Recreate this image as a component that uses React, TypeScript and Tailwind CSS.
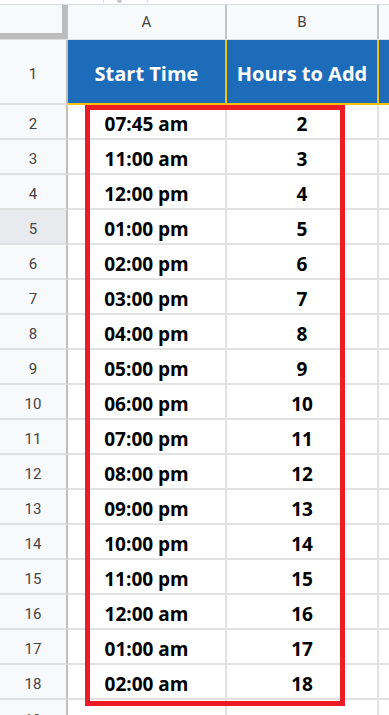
const rows: [string, number][] = [
  ['07:45 am', 2],
  ['11:00 am', 3],
  ['12:00 pm', 4],
  ['01:00 pm', 5],
  ['02:00 pm', 6],
  ['03:00 pm', 7],
  ['04:00 pm', 8],
  ['05:00 pm', 9],
  ['06:00 pm', 10],
  ['07:00 pm', 11],
  ['08:00 pm', 12],
  ['09:00 pm', 13],
  ['10:00 pm', 14],
  ['11:00 pm', 15],
  ['12:00 am', 16],
  ['01:00 am', 17],
  ['02:00 am', 18],
]

const cellFont = { fontFamily: '"Open Sans", "Liberation Sans", sans-serif' }

export default function App() {
  return (
    <div className="relative w-[389px] h-[715px] overflow-hidden bg-white text-[#000]" style={{ fontFamily: 'Roboto, "Liberation Sans", sans-serif' }}>
      {/* toolbar remnant */}
      <div className="flex h-[5px] border-b border-[#dadce0]">
        <div className="w-[103px]" />
        <div className="w-px h-[3px] bg-[#dadce0]" />
        <div className="w-[13px]" />
        <div className="w-[5px] h-[3px] rounded-b-full bg-[#c8c8c8]" />
        <div className="w-[25px]" />
        <div className="w-px h-[3px] bg-[#dadce0]" />
      </div>

      {/* column headers */}
      <div className="flex h-[35px] border-b border-[#e0e0e0] bg-[#f8f9fa]">
        <div className="flex w-[68px] shrink-0 border-r border-[#c0c0c0]">
          <div className="flex flex-col w-[62px]">
            <div className="flex-1" />
            <div className="h-[6px] bg-[#bdbdbd]" />
          </div>
          <div className="w-[5px] bg-[#bdbdbd]" />
        </div>
        <div className="w-[159px] shrink-0 border-r-2 border-[#c4c4c4] flex items-center justify-center text-[15px] text-[#444]">A</div>
        <div className="w-[152px] shrink-0 border-r-2 border-[#c4c4c4] flex items-center justify-center text-[15px] text-[#444]">B</div>
        <div className="flex-1" />
      </div>

      {/* row 1 */}
      <div className="flex h-[65px]">
        <div className="w-[68px] shrink-0 border-r-2 border-[#c0c0c0] border-b-2 border-b-[#e0e0e0] bg-[#f8f9fa] flex items-center justify-center pt-[5px] text-[15px] text-[#444]">1</div>
        <div className="w-[159px] shrink-0 bg-[#1d6cba] border-r-2 border-b-2 border-[#f6c100] flex items-center justify-center pt-[5px] text-white font-bold text-[20px]" style={cellFont}>Start Time</div>
        <div className="w-[152px] shrink-0 bg-[#1d6cba] border-r-2 border-b-2 border-[#f6c100] flex items-center justify-center pt-[5px] text-white font-bold text-[20px]" style={cellFont}>Hours to Add</div>
        <div className="flex-1 bg-[#1d6cba] border-b-2 border-[#f6c100]" />
      </div>

      {rows.map(([time, hrs], i) => (
        <div key={i} className="flex h-[35px]">
          <div className={`w-[68px] shrink-0 border-r-2 border-[#c0c0c0] border-b-2 border-b-[#e0e0e0] ${i === 3 ? 'bg-[#e8eaed]' : 'bg-[#f8f9fa]'} flex items-center justify-center pt-[5px] text-[15px] text-[#444]`}>{i + 2}</div>
          <div className="w-[159px] shrink-0 border-r-2 border-b-2 border-[#e2e2e2] flex items-center justify-center pt-[5px] font-bold text-[19px]" style={cellFont}>{time}</div>
          <div className="w-[152px] shrink-0 border-r-2 border-b-2 border-[#e2e2e2] flex items-center justify-center pt-[5px] font-bold text-[19px]" style={cellFont}>{hrs}</div>
          <div className="flex-1 border-b-2 border-[#e2e2e2]" />
        </div>
      ))}

      {/* row 19, cut off */}
      <div className="flex h-[35px]">
        <div className="w-[68px] shrink-0 border-r-2 border-[#c0c0c0] bg-[#f8f9fa] flex items-center justify-center pt-[5px] text-[15px] text-[#444]">19</div>
        <div className="w-[159px] shrink-0 border-r-2 border-[#e2e2e2]" />
        <div className="w-[152px] shrink-0 border-r-2 border-[#e2e2e2]" />
        <div className="flex-1" />
      </div>

      {/* red annotation box */}
      <div className="absolute left-[85px] top-[105px] w-[260px] h-[601px] border-[5px] border-[#ec1c24]" />
    </div>
  )
}
